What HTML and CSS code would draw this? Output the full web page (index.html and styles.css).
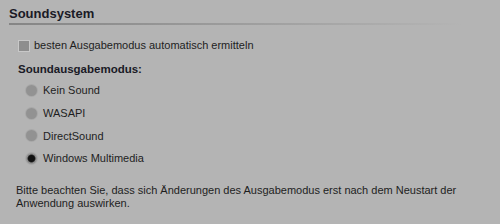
FILE: index.html
```html
<!DOCTYPE html>
<html lang="de">
<head>
    <meta charset="UTF-8">
    <title>Soundsystem</title>
    <link rel="stylesheet" href="styles.css">
</head>
<body>
    <section class="panel">
        <h2 class="panel-title">Soundsystem</h2>

        <label class="check">
            <span class="check-box"></span>
            besten Ausgabemodus automatisch ermitteln
        </label>

        <h3 class="group-title">Soundausgabemodus:</h3>
        <ul class="radio-list">
            <li class="radio"><span class="radio-dot"></span>Kein Sound</li>
            <li class="radio"><span class="radio-dot"></span>WASAPI</li>
            <li class="radio"><span class="radio-dot"></span>DirectSound</li>
            <li class="radio checked"><span class="radio-dot"></span>Windows Multimedia</li>
        </ul>

        <p class="note">Bitte beachten Sie, dass sich Änderungen des Ausgabemodus erst nach dem Neustart der Anwendung auswirken.</p>
    </section>
</body>
</html>
```

FILE: styles.css
```css
/* Base */
body {
    margin: 0;
    background-color: #b4b4b4;
    color: #1e1e1e;
    font-family: "Liberation Sans", Arial, sans-serif;
    font-size: 11px;
}

.panel {
    padding: 7px 0 0 9px;
}

/* Header with fading rule */
.panel-title {
    margin: 0 20px 0 0;
    padding-bottom: 2px;
    font-size: 13px;
    line-height: 14px;
    font-weight: bold;
    color: #1a1a26;
    border-bottom: 2px solid transparent;
    border-image: linear-gradient(to right, #858585, #b4b4b4 96%) 1;
}

/* Checkbox row */
.check {
    display: flex;
    align-items: center;
    gap: 4px;
    margin: 14px 0 0 9px;
    line-height: 13px;
}

.check-box {
    width: 10px;
    height: 10px;
    background-color: #8e8e8e;
    border: 1px solid #c8c8c8;
}

.group-title {
    margin: 10px 0 0 9px;
    font-size: 11.5px;
    line-height: 14px;
    font-weight: bold;
    color: #1a1a26;
}

/* Radio list */
.radio-list {
    list-style: none;
    margin: 3px 0 0 17px;
    padding: 0;
}

.radio {
    display: flex;
    align-items: center;
    gap: 6px;
    height: 22.7px;
}

.radio-dot {
    width: 11px;
    height: 11px;
    border-radius: 50%;
    background-color: #929292;
    box-shadow: 0 0 0 1px #a8a8a8;
}

.radio.checked .radio-dot {
    background: radial-gradient(circle, #111 0 3px, #2a2a2a 3.5px, #929292 4.5px);
}

.note {
    margin: 14px 0 0 7px;
    line-height: 13px;
    width: 470px;
}
```
